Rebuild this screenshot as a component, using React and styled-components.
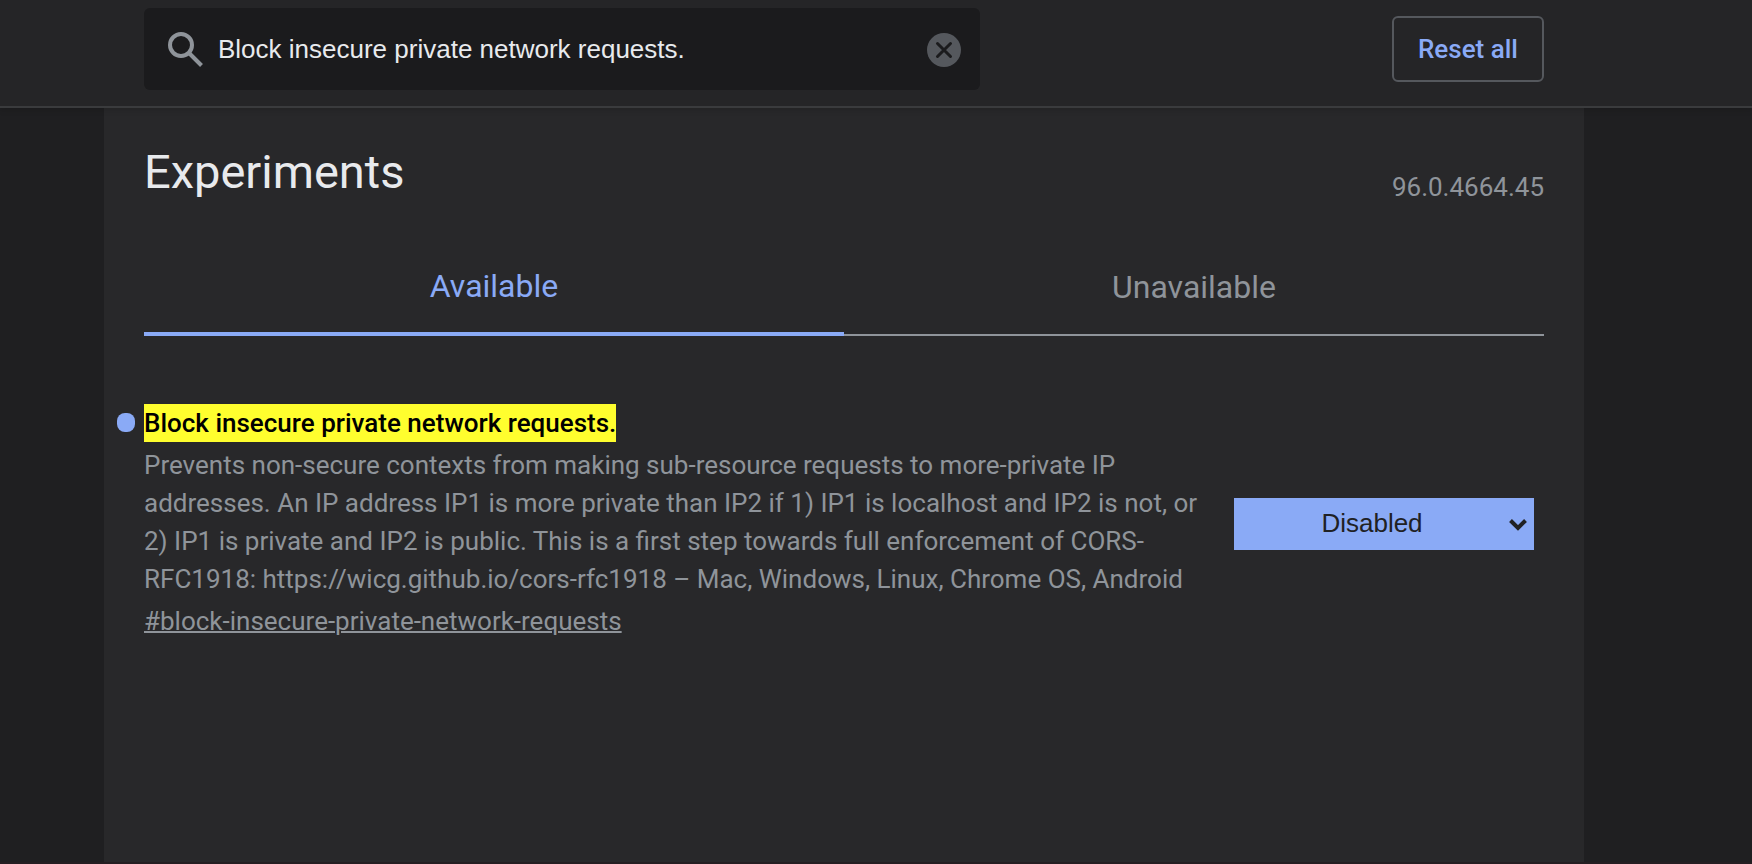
import React, { useState } from "react";
import styled, { createGlobalStyle } from "styled-components";

const GlobalStyle = createGlobalStyle`
  *, *::before, *::after { box-sizing: border-box; }
  body {
    margin: 0;
    background: #1f1f21;
    color: #e8eaed;
    font-family: Roboto, "Liberation Sans", sans-serif;
    font-size: 26px;
    line-height: 38px;
  }
  button, input, select { font: inherit; }
`;

const Page = styled.div`
  min-height: 100vh;
  display: flex;
  flex-direction: column;
  border-bottom: 2px solid #251e22;
`;

const Header = styled.header`
  position: relative;
  z-index: 1;
  display: flex;
  align-items: flex-start;
  justify-content: space-between;
  padding: 8px 208px 16px 144px;
  background: #252527;
  border-bottom: 2px solid #3a3b3d;
  box-shadow: 0 2px 6px rgba(0, 0, 0, 0.15);
`;

const SearchBox = styled.form`
  flex: 0 1 836px;
  display: flex;
  align-items: center;
  height: 82px;
  padding: 0 19px 0 24px;
  background: #1b1b1d;
  border-radius: 6px;
`;

const SearchIcon = styled.svg`
  flex: none;
  width: 36px;
  height: 36px;
  fill: none;
  stroke: #8f949a;
  stroke-width: 4;
`;

const SearchInput = styled.input`
  flex: 1;
  min-width: 0;
  margin-left: 14px;
  padding: 0;
  border: 0;
  outline: 0;
  background: none;
  color: #e8eaed;
  font-family: "Liberation Sans", Arial, sans-serif;
`;

const ClearButton = styled.button`
  flex: none;
  display: flex;
  margin-top: 2px;
  padding: 0;
  border: 0;
  background: none;
  cursor: pointer;
`;

const ResetButton = styled.button`
  flex: none;
  width: 152px;
  height: 66px;
  margin-top: 8px;
  padding: 0;
  border: 2px solid #55585d;
  border-radius: 6px;
  background: none;
  color: #8aaaf6;
  font-weight: 500;
  cursor: pointer;
`;

const Panel = styled.main`
  flex: 1;
  margin: 0 168px 0 104px;
  padding: 32px 40px;
  background: #28282a;
`;

const TitleRow = styled.div`
  display: flex;
  align-items: flex-end;
  justify-content: space-between;
`;

const Title = styled.h1`
  margin: 0;
  font-size: 47px;
  font-weight: 400;
  line-height: 64px;
`;

const Version = styled.span`
  color: #8f949a;
  line-height: 34px;
`;

const Tabs = styled.div`
  display: flex;
  margin-top: 32px;
`;

const Tab = styled.button`
  flex: 1;
  height: 100px;
  padding: 3px 0 0;
  border: 0;
  border-bottom: ${(p) => (p.$selected ? "4px solid #8aaaf6" : "2px solid #8f949a")};
  background: none;
  color: ${(p) => (p.$selected ? "#8aaaf6" : "#8f949a")};
  font-size: 32px;
  cursor: pointer;
`;

const Experiment = styled.section`
  display: flex;
  align-items: center;
  margin-top: 68px;
`;

const Description = styled.div`
  flex: 1;
  min-width: 0;
`;

const Name = styled.h2`
  position: relative;
  margin: 0;
  font-size: 26px;
  font-weight: 500;
  line-height: 38px;

  &::before {
    content: "";
    position: absolute;
    left: -27px;
    top: 9px;
    width: 18px;
    height: 19px;
    border-radius: 8px;
    background: #8aaaf6;
  }
`;

const Highlight = styled.mark`
  display: inline-block;
  background: #fffe2e;
  color: #000;
`;

const Summary = styled.p`
  margin: 4px 0;
  color: #8f949a;
`;

const Permalink = styled.a`
  display: inline-block;
  color: #8f949a;
  text-decoration: underline;
  text-decoration-thickness: 2px;
`;

const SelectWrap = styled.div`
  position: relative;
  flex: none;
  width: 300px;
  margin: 4px 10px 0 32px;
`;

const Select = styled.select`
  display: block;
  width: 100%;
  height: 52px;
  padding: 0 24px 2px 0;
  border: 0;
  border-radius: 0;
  appearance: none;
  background: #8aaaf6;
  color: #202124;
  font-family: "Liberation Sans", Arial, sans-serif;
  text-align: center;
  text-align-last: center;
`;

const Chevron = styled.svg`
  position: absolute;
  right: 6px;
  top: 20px;
  width: 20px;
  height: 14px;
  pointer-events: none;
`;

export default function App() {
  const [query, setQuery] = useState("Block insecure private network requests.");
  const [tab, setTab] = useState("available");

  return (
    <>
      <GlobalStyle />
      <Page>
        <Header>
          <SearchBox role="search" onSubmit={(e) => e.preventDefault()}>
            <SearchIcon viewBox="0 0 36 36" aria-hidden="true">
              <circle cx="13" cy="14" r="11" />
              <path d="M21.5 22.5L33.5 34.5" />
            </SearchIcon>
            <SearchInput
              type="text"
              aria-label="Search flags"
              value={query}
              onChange={(e) => setQuery(e.target.value)}
            />
            <ClearButton type="button" aria-label="Clear search" onClick={() => setQuery("")}>
              <svg width="34" height="34" viewBox="0 0 34 34" aria-hidden="true">
                <circle cx="17" cy="17" r="17" fill="#55585d" />
                <path
                  d="M10.5 10.5l13 13M23.5 10.5l-13 13"
                  stroke="#1b1b1d"
                  strokeWidth="3"
                  strokeLinecap="round"
                />
              </svg>
            </ClearButton>
          </SearchBox>
          <ResetButton type="button">Reset all</ResetButton>
        </Header>
        <Panel>
          <TitleRow>
            <Title>Experiments</Title>
            <Version>96.0.4664.45</Version>
          </TitleRow>
          <Tabs role="tablist">
            <Tab
              type="button"
              role="tab"
              aria-selected={tab === "available"}
              $selected={tab === "available"}
              onClick={() => setTab("available")}
            >
              Available
            </Tab>
            <Tab
              type="button"
              role="tab"
              aria-selected={tab === "unavailable"}
              $selected={tab === "unavailable"}
              onClick={() => setTab("unavailable")}
            >
              Unavailable
            </Tab>
          </Tabs>
          <Experiment>
            <Description>
              <Name id="experiment-name">
                <Highlight>Block insecure private network requests.</Highlight>
              </Name>
              <Summary>
                Prevents non-secure contexts from making sub-resource requests to more-private IP
                addresses. An IP address IP1 is more private than IP2 if 1) IP1 is localhost and IP2
                is not, or 2) IP1 is private and IP2 is public. This is a first step towards full
                enforcement of CORS-RFC1918: https://wicg.github.io/cors-rfc1918 – Mac, Windows,
                Linux, Chrome OS, Android
              </Summary>
              <Permalink href="#block-insecure-private-network-requests">
                #block-insecure-private-network-requests
              </Permalink>
            </Description>
            <SelectWrap>
              <Select aria-labelledby="experiment-name" defaultValue="Disabled">
                <option>Default</option>
                <option>Enabled</option>
                <option>Disabled</option>
              </Select>
              <Chevron viewBox="0 0 20 14" aria-hidden="true">
                <path
                  d="M2.5 2.5L10 10l7.5-7.5"
                  fill="none"
                  stroke="#202124"
                  strokeWidth="4"
                />
              </Chevron>
            </SelectWrap>
          </Experiment>
        </Panel>
      </Page>
    </>
  );
}
